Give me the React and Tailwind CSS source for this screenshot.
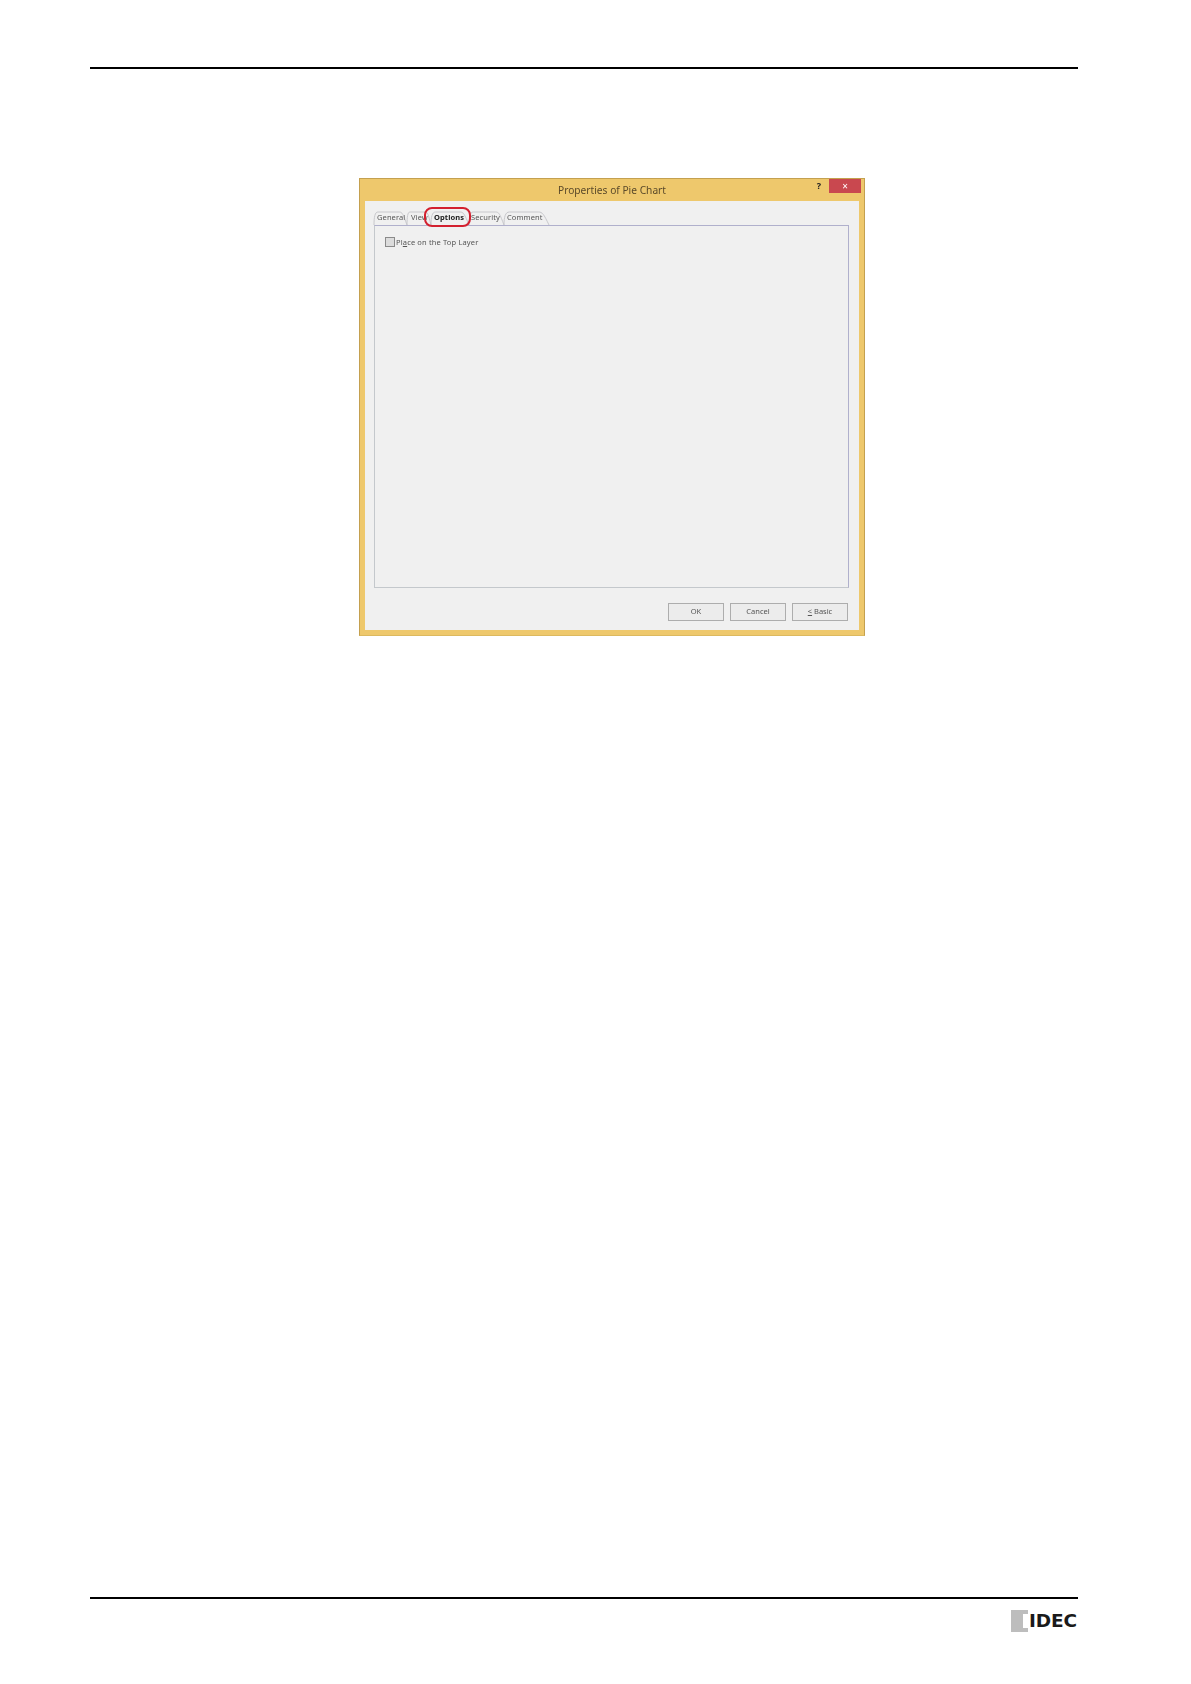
const tabs = [
  { label: 'General', w: 'w-[33px]', text: 'pl-[3px]' },
  { label: 'View', w: 'w-[24px]', text: 'pl-[4px]' },
  { label: 'Options', w: 'w-[38px]', text: 'pl-[3px]', active: true },
  { label: 'Security', w: 'w-[35px]', text: 'pl-[2px]' },
  { label: 'Comment', w: 'w-[45px]', text: 'pl-[3px]' },
];

const Tab = ({ label, w, text, active }) => (
  <div className={`relative h-[14px] ${w} ${text} leading-[12px] text-[7.5px] tracking-[0.1px] ${active ? 'font-bold text-[#222]' : 'text-[#555]'}`}>
    <svg className="absolute left-0 top-0 h-[14px] w-full overflow-visible" viewBox="0 0 34 14" preserveAspectRatio="none" fill="none">
      <path d="M0 14 C0 6 1 1 4 1 L26 1 C29 1 30 3 34 14" stroke="#c8c8cc" strokeWidth="1" vectorEffect="non-scaling-stroke" />
    </svg>
    <span className="relative">{label}</span>
  </div>
);

const App = () => {
  return (
    <div className="flex h-[1684px] w-[1191px] flex-col bg-white font-['Noto_Sans',sans-serif]">
      <div className="ml-[90px] mr-[113px] mt-[67px] h-[2px] bg-black" />

      <div className="ml-[359px] mt-[109px] flex h-[458px] w-[506px] flex-col border border-[#c4a04f] border-b-[#dcb95f] bg-[#eec86c] px-[5px] pb-[5px] blur-[0.3px]">
        <div className="relative flex h-[22px] shrink-0 items-center justify-center pt-[1px] text-[10.2px] text-[#5b4a2a]">
          Properties of Pie Chart
          <span className="absolute right-[38px] top-[0px] text-[9px] font-bold text-[#222]">?</span>
          <div className="absolute right-[-2px] top-0 flex h-[14px] w-[32px] items-center justify-center bg-[#c9484f] text-[10px] leading-none text-white">
            ×
          </div>
        </div>

        <div className="flex flex-1 flex-col bg-[#f0f0f0] pb-[9px] pl-[9px] pr-[10px] pt-[10px]">
          <div className="relative flex">
            {tabs.map((tab) => (
              <Tab key={tab.label} {...tab} />
            ))}
            <div className="absolute left-[50px] top-[-4px] h-[20px] w-[47px] rounded-[8px] border-2 border-[#d3202f]" />
          </div>
          <div className="flex-1 border border-[#b0b0cc] border-b-[#c4c8cc] border-l-[#c4c8cc] pl-[10px] pt-[10px]">
            <div className="flex items-center gap-[1px] text-[7.5px] leading-[12px] text-[#555]">
              <div className="h-[10px] w-[10px] border border-[#8a8a8a] bg-[#dcdcdc]" />
              <span className="tracking-[0.15px]">
                Pl<span className="underline">a</span>ce on the Top Layer
              </span>
            </div>
          </div>
          <div className="mt-[15px] flex justify-end gap-[6px] pr-[1px]">
            {['OK', 'Cancel', '< Basic'].map((label) => (
              <button key={label} className="h-[18px] w-[56px] border border-[#adadad] bg-[#ececec] text-[7.5px] leading-none text-[#555]">
                {label === '< Basic' ? (
                  <>
                    <span className="underline">&lt;</span> Basic
                  </>
                ) : (
                  label
                )}
              </button>
            ))}
          </div>
        </div>
      </div>

      <div className="ml-[90px] mr-[113px] mt-auto h-[2px] bg-black" />
      <div className="mb-[52px] mr-[112px] mt-[11px] flex items-center justify-end">
        <div className="relative flex h-[22px] w-[68px] items-center">
          <div className="h-[22px] w-[17px] shrink-0 bg-[#bdbdbd]" />
          <div className="absolute left-[12px] top-[4px] h-[14px] w-[5px] bg-white" />
          <span className="pl-[1px] font-['DejaVu_Sans',sans-serif] text-[18.5px] font-bold leading-none tracking-[-0.1px] text-[#1a1a1a]">IDEC</span>
        </div>
      </div>
    </div>
  );
};

export default App;
